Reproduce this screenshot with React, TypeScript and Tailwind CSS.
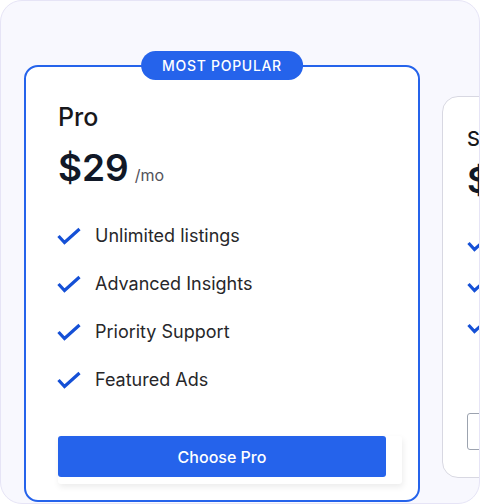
import React from "react";

function Check({ className = "" }: { className?: string }) {
  return (
    <svg width="24" height="18" viewBox="0 0 24 18" className={className} fill="none">
      <polyline points="1.5,9 7.5,15.5 22.5,2" stroke="currentColor" strokeWidth="3.2" />
    </svg>
  );
}

const proFeatures = ["Unlimited listings", "Advanced Insights", "Priority Support", "Featured Ads"];
const otherFeatures = ["Everything in Pro", "Team accounts", "API access"];

export default function App() {
  return (
    <div
      className="w-[480px] h-[504px] overflow-hidden rounded-[22px] border border-[#e6e4f6] bg-[#f8f8fe]"
      style={{ fontFamily: "Inter, 'Noto Sans', sans-serif" }}
    >
      <div className="flex items-start gap-[22px] pl-[23px] pt-[64px]">
        {/* Pro card */}
        <div className="relative flex h-[437px] w-[396px] shrink-0 flex-col rounded-[14px] border-2 border-[#2563eb] bg-white px-8 pt-[34px]">
          <div className="absolute -top-[16px] left-1/2 flex h-[29px] -translate-x-1/2 items-center rounded-full bg-[#2563eb] px-[21px] text-[14px] font-medium tracking-wider text-white whitespace-nowrap">
            MOST POPULAR
          </div>
          <div className="text-[25px] leading-8 font-medium text-[#18181b]">Pro</div>
          <div className="mt-[15px] flex items-baseline">
            <span className="text-[37px] leading-10 font-semibold text-[#111827]">$29</span>
            <span className="ml-[6px] text-[16px] text-[#52525b]">/mo</span>
          </div>
          <ul className="mt-[34px] flex flex-col gap-5">
            {proFeatures.map((f) => (
              <li key={f} className="flex h-7 items-center gap-[14px] -ml-px">
                <Check className="text-[#1550d6] shrink-0" />
                <span className="text-[18px] leading-7 text-[#27272a]">{f}</span>
              </li>
            ))}
          </ul>
          <div className="mt-[42px] -mr-4 rounded-[3px] bg-white pr-4 pb-[7px] shadow-[1px_3px_6px_rgba(0,0,0,0.08)]">
            <button className="flex h-[41px] w-full items-center justify-center rounded-[3px] bg-[#2563eb] text-[16px] font-medium text-white">
              Choose Pro
            </button>
          </div>
        </div>

        {/* Second card (clipped) */}
        <div className="mt-[31px] flex h-[382px] w-[300px] shrink-0 flex-col rounded-[16px] border border-[#d8d8e2] bg-white px-6 pt-7">
          <div className="text-[20px] leading-7 font-medium text-[#18181b]">Starter</div>
          <div className="mt-[7px] flex items-baseline">
            <span className="text-[36px] leading-10 font-semibold text-[#111827]">$9</span>
            <span className="ml-[6px] text-[16px] text-[#52525b]">/mo</span>
          </div>
          <ul className="mt-[31px] flex flex-col gap-[17px]">
            {otherFeatures.map((f) => (
              <li key={f} className="flex h-6 items-center gap-3">
                <Check className="text-[#1550d6] shrink-0" />
                <span className="text-[16px] leading-6 text-[#27272a]">{f}</span>
              </li>
            ))}
          </ul>
          <button className="mt-[76px] flex h-[37px] w-full items-center justify-center rounded-[3px] border border-[#9ca3af] bg-white text-[16px] font-medium text-[#27272a]">
            Choose Starter
          </button>
        </div>
      </div>
    </div>
  );
}
